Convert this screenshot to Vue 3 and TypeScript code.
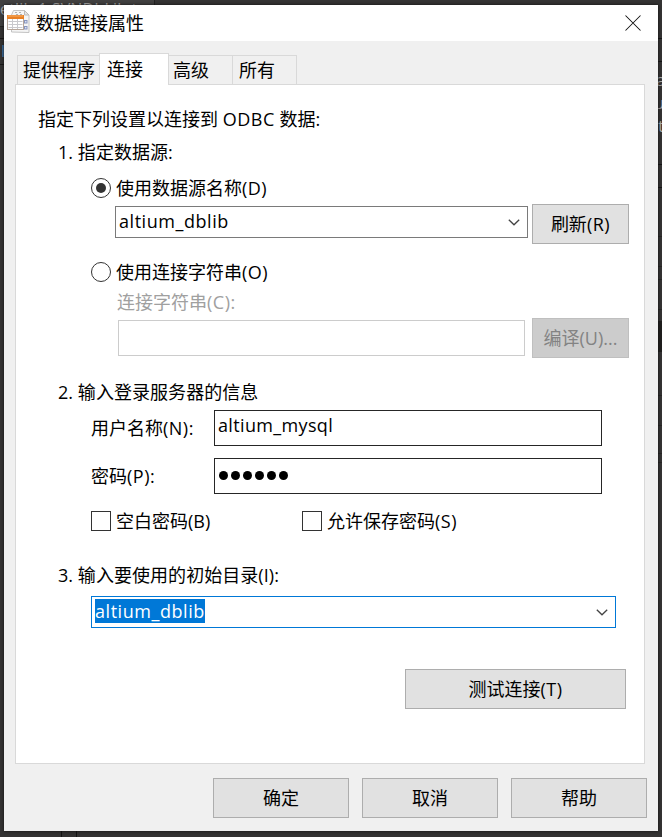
<script setup lang="ts">
import { ref } from 'vue'

const tabs: string[] = ['提供程序', '连接', '高级', '所有']
const activeTab = ref<number>(1)
const source = ref<'dsn' | 'string'>('dsn')
const passwordLength = 6
const actions: string[] = ['确定', '取消', '帮助']
const rules: number[] = [38, 61, 164, 187]
const lowerRules: number[] = [236, 266, 279, 309, 395, 425, 453, 462]
</script>

<template>
  <div class="desktop">
    <div class="toolbar"><span>etlib 1.SVNDbLib.t</span></div>
    <i class="left-rule upper"></i>
    <i class="left-mark"></i>
    <i class="left-rule"></i>
    <span class="stray r1">a</span>
    <span class="stray r2">u</span>
    <span class="stray r3">t</span>
    <i v-for="y in rules" :key="y" class="edge" :style="{ top: y + 'px' }"></i>
    <i v-for="y in lowerRules" :key="y" class="edge soft" :style="{ top: y + 'px' }"></i>
    <i class="edge-block"></i>
    <i class="foot-rule a"></i>
    <i class="foot-rule b"></i>

    <main class="dialog">
      <header class="titlebar">
        <svg class="app-icon" width="24" height="24" viewBox="0 0 24 24">
          <path d="M6.500 .5h11l4.500 4.500v17.500l-17.500-.5v-17z" fill="#f5f5f5" stroke="#c3c3c3" />
          <path d="M17.500 .5v4.500h4.500z" fill="#e4e4e4" stroke="#bbb" />
          <path d="M8 2.500h2M12 2.500h2M9 4.500h2M13 4.500h2" stroke="#b0b0b0" />
          <rect x="17.500" y="10.500" width="2.500" height="2.500" fill="#dce2f5" stroke="#8795be" />
          <rect x="17.500" y="16.500" width="2.500" height="2.500" fill="#dce2f5" stroke="#8795be" />
          <rect x=".5" y="5.500" width="16" height="14" fill="#fff" stroke="#b7a79b" />
          <rect x="0" y="5" width="17" height="4" fill="#e98024" />
          <path d="M1 6h15" stroke="#f7ad64" />
          <path d="M1.500 11.500h14M1.500 14.500h14M1.500 17.500h14M5.500 9v10M10.500 9v10" stroke="#c9c9cd" />
        </svg>
        <h1>数据链接属性</h1>
        <svg class="close" width="16" height="16" viewBox="0 0 16 16">
          <path d="M.5 .5l15 15M15.500 .5l-15 15" stroke="#111" stroke-width="1.050" />
        </svg>
      </header>

      <nav class="tabs">
        <div
          v-for="(tab, i) in tabs"
          :key="tab"
          class="tab"
          :class="['tab-' + i, { active: i === activeTab }]"
          @click="activeTab = i"
        >{{ tab }}</div>
      </nav>

      <section class="panel">
        <p class="lead">指定下列设置以连接到 <span class="odbc">ODBC</span> 数据:</p>

        <h2>1. 指定数据源:</h2>
        <div class="option" @click="source = 'dsn'">
          <i class="radio" :class="{ on: source === 'dsn' }"></i><span>使用数据源名称<b>(D)</b></span>
        </div>
        <div class="row source-row">
          <div class="combo source">
            <span class="value">altium_dblib</span>
            <svg width="12" height="7" viewBox="0 0 12 7"><path d="M.8 .8L6 5.800L11.200 .8" /></svg>
          </div>
          <button class="small">刷新<b>(R)</b></button>
        </div>
        <div class="option second" @click="source = 'string'">
          <i class="radio" :class="{ on: source === 'string' }"></i><span>使用连接字符串<b>(O)</b></span>
        </div>
        <div class="sublabel">连接字符串<b>(C):</b></div>
        <div class="row string-row">
          <div class="field disabled"></div>
          <button class="small" disabled>编译(U)...</button>
        </div>

        <h2 class="login">2. 输入登录服务器的信息</h2>
        <div class="row credential">
          <label>用户名称<b>(N):</b></label>
          <div class="field"><span class="value user">altium_mysql</span></div>
        </div>
        <div class="row credential password">
          <label>密码<b>(P):</b></label>
          <div class="field dots"><i v-for="n in passwordLength" :key="n"></i></div>
        </div>
        <div class="row checks">
          <div class="check"><i></i><span>空白密码(B)</span></div>
          <div class="check"><i></i><span>允许保存密码<b>(S)</b></span></div>
        </div>

        <h2 class="catalog-title">3. 输入要使用的初始目录(I):</h2>
        <div class="combo catalog">
          <span class="value selected">altium_dblib</span>
          <svg width="12" height="7" viewBox="0 0 12 7"><path d="M.8 .8L6 5.800L11.200 .8" /></svg>
        </div>
        <button class="test">测试连接<b>(T)</b></button>
      </section>

      <footer>
        <button v-for="a in actions" :key="a">{{ a }}</button>
      </footer>
    </main>
  </div>
</template>

<style>
body {
  margin: 0;
  background: #343333;
}
</style>

<style scoped>
* {
  box-sizing: border-box;
}
.desktop {
  position: relative;
  width: 662px;
  height: 837px;
  padding: 5px 4px 6px;
  overflow: hidden;
  background: #343333;
  font-family: "Open Sans", "Noto Sans CJK SC", sans-serif;
  font-size: 18px;
  color: #000;
}
b {
  font-weight: 400;
  letter-spacing: .5px;
}
.toolbar {
  position: absolute;
  left: 0;
  top: 0;
  width: 155px;
  height: 27px;
  overflow: hidden;
  background: #414040;
  border-right: 1px solid #222;
  border-bottom: 1px solid #222;
  color: #aaa;
  font-size: 16px;
  line-height: 18px;
  letter-spacing: .2px;
  white-space: nowrap;
}
.left-rule, .left-mark, .edge, .edge-block, .foot-rule, .stray {
  position: absolute;
}
.left-rule {
  left: 0;
  top: 64px;
  width: 4px;
  height: 1px;
  background: #181818;
}
.left-rule.upper {
  top: 38px;
}
.left-mark {
  left: 2px;
  top: 45px;
  width: 2px;
  height: 12px;
  background: #3d6c9c;
}
.stray {
  color: #aaa;
  font-size: 17px;
  line-height: 20px;
}
.r1 {
  left: 656px;
  top: 70px;
}
.r2 {
  left: 654px;
  top: 93px;
}
.r3 {
  left: 658px;
  top: 116px;
}
.edge {
  right: 0;
  width: 4px;
  height: 1px;
  background: #151515;
}
.edge.soft {
  background: #272625;
}
.edge-block {
  right: 0;
  top: 321px;
  width: 4px;
  height: 31px;
  background: #201f1e;
}
.foot-rule {
  top: 831px;
  width: 1px;
  height: 6px;
  background: #151515;
}
.foot-rule.a {
  left: 61px;
}
.foot-rule.b {
  left: 76px;
}
.dialog {
  position: relative;
  display: flex;
  flex-direction: column;
  height: 826px;
  background: #f0f0f0;
  box-shadow: 0 0 3px #111;
}
.titlebar {
  display: flex;
  align-items: center;
  height: 36px;
  padding: 0 17px 0 3px;
  background: #fff;
}
.app-icon {
  margin-top: -2px;
}
h1, h2, p {
  margin: 0;
  font-size: 18px;
  font-weight: 400;
  white-space: nowrap;
}
h1 {
  margin-left: 5px;
  line-height: 34px;
}
.close {
  margin-left: auto;
}
.tabs {
  display: flex;
  align-items: flex-end;
  height: 43px;
  padding-left: 13px;
}
.tab {
  height: 29px;
  border: 1px solid #d9d9d9;
  border-bottom: 0;
  padding-left: 5px;
  line-height: 29px;
  white-space: nowrap;
}
.tab-0 {
  width: 82px;
  border-right: 0;
}
.tab-2 {
  width: 64px;
  border-left: 0;
  padding-left: 4px;
}
.tab-3 {
  width: 64px;
  border-left: 0;
  padding-left: 6px;
}
.tab.active {
  position: relative;
  z-index: 1;
  width: 70px;
  height: 32px;
  margin-bottom: -1px;
  padding-left: 7px;
  background: #fff;
  line-height: 30px;
}
.panel {
  display: flex;
  flex-direction: column;
  width: 630px;
  height: 680px;
  margin-left: 11px;
  padding: 18px 0 0 22px;
  background: #fff;
  border: 1px solid #d9d9d9;
}
.lead {
  height: 33px;
  line-height: 32px;
}
.odbc {
  letter-spacing: .5px;
}
h2 {
  height: 34px;
  padding-left: 20px;
  line-height: 33px;
  letter-spacing: .05px;
}
.option {
  display: flex;
  align-items: center;
  gap: 5px;
  height: 32px;
  margin-top: 2px;
  padding-left: 53px;
}
.option span, .check span, .credential label {
  padding-bottom: 2px;
}
.option.second {
  margin-top: 12px;
}
.radio {
  display: grid;
  place-items: center;
  width: 20px;
  height: 20px;
  border: 1px solid #333;
  border-radius: 50%;
}
.radio.on::after {
  width: 10px;
  height: 10px;
  border-radius: 50%;
  background: #333;
  content: "";
}
.row {
  display: flex;
  align-items: center;
}
.source-row {
  height: 40px;
  padding-left: 77px;
  gap: 4px;
}
.combo {
  display: flex;
  align-items: center;
  justify-content: space-between;
  height: 32px;
  padding: 0 7px 0 3px;
  border: 1px solid #7a7a7a;
  background: #fff;
}
.combo svg {
  fill: none;
  stroke: #444;
  stroke-width: 1.300;
}
.source {
  width: 413px;
  margin-top: -4px;
}
.value {
  font-size: 18px;
  line-height: 24px;
  letter-spacing: .55px;
}
.combo .value {
  margin-bottom: 2px;
}
.field .user {
  margin: -1px 0 0 -1px;
  letter-spacing: .35px;
}
button {
  width: 136px;
  height: 40px;
  padding: 0 0 2px;
  border: 1px solid #adadad;
  border-radius: 0;
  background: #e1e1e1;
  color: #000;
  font: inherit;
}
button.small {
  width: 97px;
}
button:disabled {
  border-color: #bfbfbf;
  background: #ccc;
  color: #838383;
}
.sublabel {
  height: 30px;
  padding-left: 79px;
  color: #a0a0a0;
  line-height: 29px;
}
.string-row {
  height: 40px;
  padding-left: 80px;
  gap: 7px;
}
.field {
  width: 388px;
  height: 36px;
  padding: 3px 4px;
  border: 1px solid #262626;
  background: #fff;
}
.field .value {
  display: block;
}
.field.disabled {
  width: 407px;
  border-color: #ccc;
}
.login {
  margin-top: 18px;
}
.credential {
  height: 36px;
  padding-left: 53px;
}
.credential label {
  width: 123px;
}
.password {
  margin-top: 12px;
}
.dots {
  display: flex;
  gap: 3px;
  padding: 12px 4px;
}
.dots i {
  width: 9px;
  height: 9px;
  border-radius: 50%;
  background: #000;
}
.checks {
  height: 32px;
  margin-top: 11px;
  padding-left: 53px;
}
.check {
  display: flex;
  align-items: center;
  gap: 5px;
  width: 211px;
}
.check i {
  width: 20px;
  height: 20px;
  border: 1px solid #333;
}
.catalog-title {
  height: 33px;
  margin-top: 22px;
}
.catalog {
  width: 525px;
  margin: 4px 0 0 53px;
  border-color: #0078d7;
}
.selected {
  background: #0078d7;
  color: #fff;
}
.test {
  width: 221px;
  margin: 41px 0 0 367px;
}
footer {
  display: flex;
  justify-content: flex-end;
  gap: 13px;
  margin-top: 14px;
  padding-right: 11px;
}
</style>
